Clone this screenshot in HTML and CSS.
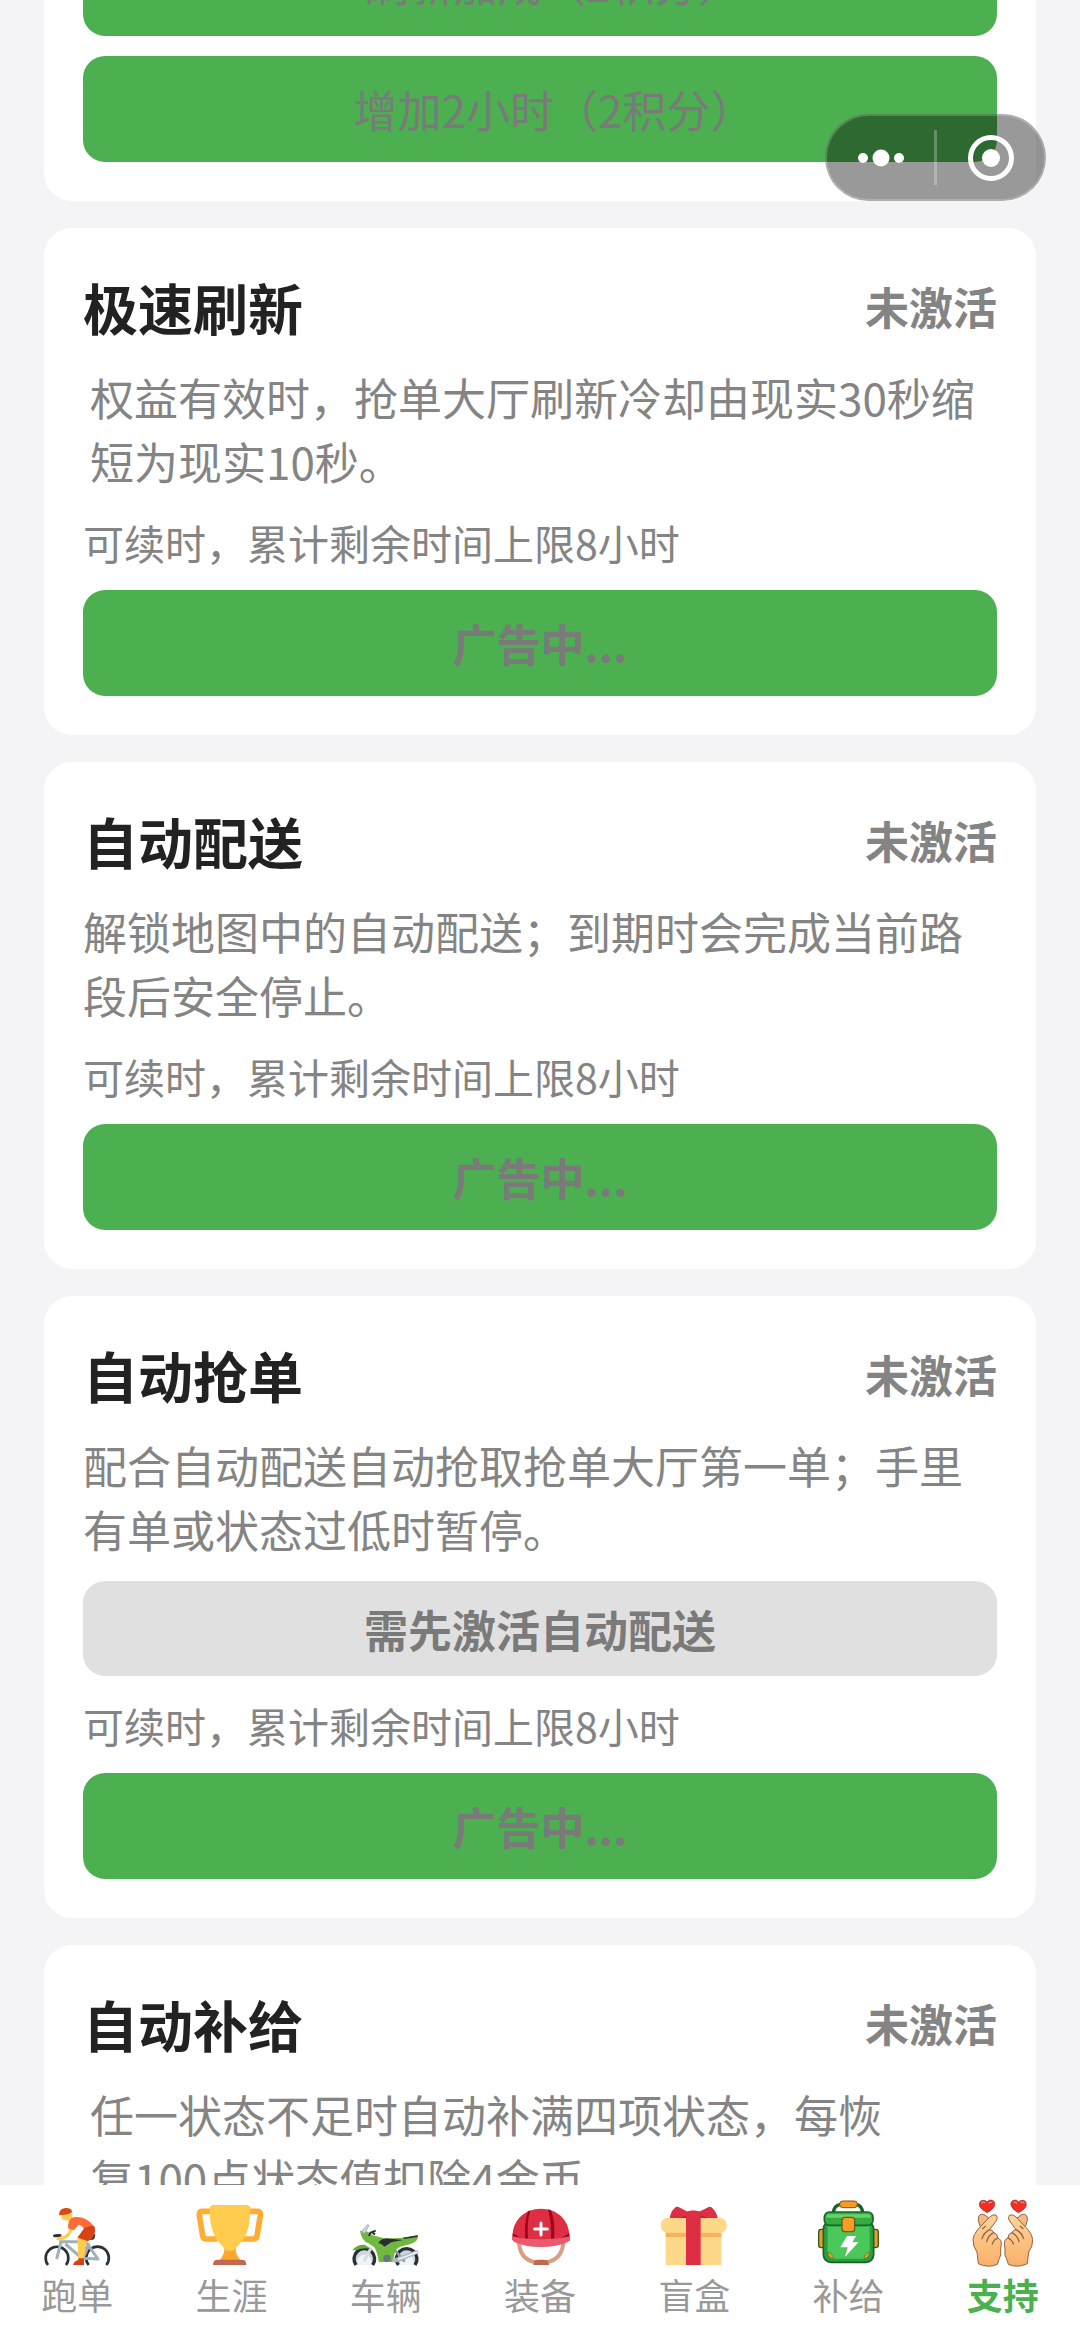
FILE: index.html
```html
<!DOCTYPE html>
<html lang="zh-CN">
<head>
    <meta charset="UTF-8">
    <meta name="viewport" content="width=device-width, initial-scale=1.0">
    <title>支持</title>
    <link rel="stylesheet" href="styles.css">
</head>
<body>
    <main class="page">
        <section class="card">
            <button type="button" class="btn btn-points">刷新加成（2积分）</button>
            <button type="button" class="btn btn-points">增加2小时（2积分）</button>
        </section>

        <section class="card">
            <div class="card-head">
                <h2>极速刷新</h2>
                <span class="status">未激活</span>
            </div>
            <p class="desc indent">权益有效时，抢单大厅刷新冷却由现实30秒缩短为现实10秒。</p>
            <p class="note">可续时，累计剩余时间上限8小时</p>
            <button type="button" class="btn">广告中...</button>
        </section>

        <section class="card">
            <div class="card-head">
                <h2>自动配送</h2>
                <span class="status">未激活</span>
            </div>
            <p class="desc">解锁地图中的自动配送；到期时会完成当前路段后安全停止。</p>
            <p class="note">可续时，累计剩余时间上限8小时</p>
            <button type="button" class="btn">广告中...</button>
        </section>

        <section class="card">
            <div class="card-head">
                <h2>自动抢单</h2>
                <span class="status">未激活</span>
            </div>
            <p class="desc">配合自动配送自动抢取抢单大厅第一单；手里有单或状态过低时暂停。</p>
            <button type="button" class="btn btn-locked">需先激活自动配送</button>
            <p class="note">可续时，累计剩余时间上限8小时</p>
            <button type="button" class="btn">广告中...</button>
        </section>

        <section class="card">
            <div class="card-head">
                <h2>自动补给</h2>
                <span class="status">未激活</span>
            </div>
            <p class="desc indent">任一状态不足时自动补满四项状态，每恢<br>复100点状态值扣除4金币</p>
        </section>
    </main>

    <!-- Floating capsule menu -->
    <div class="capsule">
        <button type="button" class="capsule-btn" aria-label="更多">
            <svg width="48" height="48" viewBox="0 0 48 48" fill="#fff">
                <circle cx="6" cy="24" r="5"/>
                <circle cx="24" cy="24" r="8.500"/>
                <circle cx="42" cy="24" r="5"/>
            </svg>
        </button>
        <span class="capsule-line"></span>
        <button type="button" class="capsule-btn" aria-label="关闭">
            <svg width="48" height="48" viewBox="0 0 48 48">
                <circle cx="24" cy="24" r="20.500" fill="none" stroke="#fff" stroke-width="5"/>
                <circle cx="24" cy="24" r="9" fill="#fff"/>
            </svg>
        </button>
    </div>

    <nav class="tabbar">
        <a href="#run" class="tab">
            <svg class="tab-icon" viewBox="123 51 216 216">
                <g fill="none" stroke="#292f33" stroke-width="8">
                    <path d="M144 255a34 34 0 1 1 54 0"/>
                    <path d="M266 255a34 34 0 1 1 53 0"/>
                </g>
                <path d="M159 165q10-4 25-2v9h-20q-6-2-5-7zM266 165q14-8 20 0l-3 11q-8 6-17 3z" fill="#292f33"/>
                <path d="M249 203q15-10 18 2l-8 20h-11z" fill="#bf360c"/>
                <path d="M170 237l14-54M177 185h80l37 52-42-2M196 192l44 38M268 190l-18 42" fill="none" stroke="#9fb0bd" stroke-width="9" stroke-linejoin="round"/>
                <path d="M207 138q3 21-15 29l-22 5v8q18 4 30-6 16-11 21-34z" fill="#ffcc4d"/>
                <path d="M232 172l31-3-12 69h-16z" fill="#ffcc4d"/>
                <path d="M184 103l33-2q1 20-12 22l-20-6z" fill="#ffcc4d"/>
                <path d="M177 106q-1-19 19-22 19-1 20 11-1 8-39 11z" fill="#d84b16"/>
                <path d="M204 145q0-29 16-33 37-5 62 27 4 5 3 14-3 22-20 30-13-3-32-10l20-24q-6-13-18-15-8 11-14 17z" fill="#ff6b35"/>
                <path d="M233 172q13-18 20-28 17-9 30-5 8 31-20 44z" fill="#d84315"/>
                <path d="M235 235h17v20h-33q3-12 16-15z" fill="#d84315"/>
            </svg>
            <span>跑单</span>
        </a>
        <a href="#career" class="tab">
            <svg class="tab-icon" viewBox="586 51 216 216">
                <path d="M640 94h-34q-8 0-7 12l10 61q2 10 11 10h34M741 94h34q8 0 7 12l-10 61q-2 10-11 10h-34" fill="none" stroke="#ffac33" stroke-width="17"/>
                <path d="M674 202h34q-2 23 16 40h-66q18-17 16-40z" fill="#ffa72b"/>
                <path d="M630 86q0-11 12-11h98q12 0 12 11 0 71-29 102-11 12-22 24h-21q-10-12-21-24-29-31-29-102z" fill="#ffcc4d"/>
                <path d="M640 255q0-16 14-16h73q13 0 13 16z" fill="#c1694f"/>
            </svg>
            <span>生涯</span>
        </a>
        <a href="#vehicle" class="tab">
            <svg class="tab-icon" viewBox="119 51 216 216">
                <g fill="#ccd6dd" stroke="#292f33" stroke-width="10">
                    <path d="M137 255a31 31 0 1 1 50 0"/>
                    <path d="M264 255a31 31 0 1 1 50 0"/>
                </g>
                <path d="M144 255a21 21 0 1 1 36 0zM271 255a21 21 0 1 1 36 0z" fill="#f1f4f6"/>
                <path d="M181 206l-18 34" stroke="#d5dde3" stroke-width="9" stroke-linecap="round"/>
                <path d="M252 209l31 36" stroke="#8899a6" stroke-width="8"/>
                <path d="M126 211q12-18 37-17l19 12q-27-4-44 5z" fill="#68a83c"/>
                <path d="M149 153q20-4 38 13l40 10 50-3 46-7q3 18-25 27-33 6-43 18l-8 35h-42q-3-28-13-44l-18-12q-20-8-25-37z" fill="#70b83e"/>
                <path d="M153 157l18-23 5 2-12 24z" fill="#ccd6dd" stroke="#8899a6" stroke-width="2"/>
                <path d="M176 168l4-10 16-6M186 157l8 6" fill="none" stroke="#292f33" stroke-width="6"/>
                <path d="M204 188q10-12 24-13l50 5-35 7-21 13q-5-8-18-12zM278 173l44-7v5l-40 6z" fill="#292f33"/>
                <circle cx="230" cy="235" r="11" fill="#66757f"/>
                <path d="M245 238l75-28 6 9-61 28h-20z" fill="#aab8c2"/>
                <path d="M264 238l58-22" stroke="#f1f4f6" stroke-width="5"/>
            </svg>
            <span>车辆</span>
        </a>
        <a href="#gear" class="tab">
            <svg class="tab-icon" viewBox="582 51 216 216">
                <path d="M627 188q4 60 66 60t67-60" fill="none" stroke="#d99e82" stroke-width="12"/>
                <path d="M670 255q1-16 13-16h20q13 0 14 16z" fill="#c1694f"/>
                <path d="M608 166c1-46 36-80 85-80s84 34 85 80l2 16-174-3z" fill="#dd2e44"/>
                <path d="M661 91q-12 38-6 91h-9q-5-50 8-88zM723 91q14 38 9 91h-9q3-50-9-94z" fill="#a0041e"/>
                <path d="M608 160q37 25 85 25t85-25v15q-40 17-85 17t-85-17z" fill="#a0041e"/>
                <path d="M606 169q40 9 87 9t87-9q2 12-8 18-30 14-79 14t-79-14q-10-6-8-18z" fill="#ea596e"/>
                <path d="M655 173l7-75h54l7 75q-34 7-68 0z" fill="#dd2e44"/>
                <path d="M693 129v36M674 147h38" stroke="#fff" stroke-width="9" stroke-linecap="round"/>
            </svg>
            <span>装备</span>
        </a>
        <a href="#box" class="tab">
            <svg class="tab-icon" viewBox="145 51 216 216">
                <path d="M168 150h167v105H168z" fill="#fdd888"/>
                <path d="M168 157h167v14H168z" fill="#f4b35c"/>
                <rect x="153" y="114" width="198" height="44" rx="20" fill="#fdd888"/>
                <path d="M180 114q3-20 16-31 5-5 15 0l23 12q17-7 34 0l25-12q8-5 14 0 14 13 17 31z" fill="#dd2e44"/>
                <path d="M229 95q22-6 44 0v160h-44z" fill="#dd2e44"/>
                <path d="M229 109l-13 5M273 109l15 5" stroke="#a0041e" stroke-width="2"/>
            </svg>
            <span>盲盒</span>
        </a>
        <a href="#supply" class="tab">
            <svg class="tab-icon" viewBox="608 51 216 216">
                <path d="M669 98q2-22 22-25h46q18 3 20 25" fill="none" stroke="#176526" stroke-width="10"/>
                <rect x="688" y="63" width="53" height="20" rx="9" fill="#f49b22" stroke="#805013" stroke-width="3"/>
                <rect x="625" y="148" width="20" height="55" rx="8" fill="#f39b20" stroke="#315627" stroke-width="4"/>
                <rect x="785" y="148" width="19" height="55" rx="8" fill="#f39b20" stroke="#315627" stroke-width="4"/>
                <rect x="639" y="124" width="151" height="123" rx="23" fill="#2d9d40" stroke="#176526" stroke-width="5"/>
                <path d="M652 137h126v78q0 21-20 21h-86q-20 0-20-21z" fill="#4ac85a"/>
                <rect x="642" y="96" width="146" height="40" rx="15" fill="#35ac43" stroke="#176526" stroke-width="5"/>
                <path d="M655 103h119q7 0 7 10H648q0-10 7-10z" fill="#66d466"/>
                <rect x="695" y="112" width="38" height="43" rx="9" fill="#f79d25" stroke="#6c5b1b" stroke-width="4"/>
                <path d="M652 216q16 5 17 20-16-1-17-20zM778 216q-16 5-17 20 16-1 17-20z" fill="#f39b20" stroke="#317c31" stroke-width="2"/>
                <path d="M710 168h27l-11 19 19-1-41 45 8-29h-22z" fill="#fff"/>
            </svg>
            <span>补给</span>
        </a>
        <a href="#support" class="tab active">
            <svg class="tab-icon" viewBox="201 51 216 216">
                <defs>
                    <linearGradient id="skin" x1="0" y1="0" x2="0" y2="1">
                        <stop offset="0" stop-color="#ffd49a"/>
                        <stop offset="1" stop-color="#f9b06a"/>
                    </linearGradient>
                    <g id="hand">
                        <path d="M240 138q-8-18-4-29 7-11 20-3l13 11-10 25z" fill="#f7b982" stroke="#8e6445" stroke-width="3"/>
                        <path d="M235 251l-4-35q-13-17-12-38 2-15 13-28l37-39q9-9 19-6 7 7 1 17l-20 27q10 1 12 9 12 2 12 16 12 5 11 18l-2 15q3 21-5 30l-5 16q-27 12-57-2z" fill="url(#skin)" stroke="#8e6445" stroke-width="3"/>
                        <path d="M269 149q-17 8-23 27M281 158q-17 9-21 27M293 174q-12 5-16 18M256 139l-8 7" fill="none" stroke="#8e6445" stroke-width="4" stroke-linecap="round"/>
                        <path d="M262 98q-24-11-24-25 1-13 13-12 7 1 10 5 6-9 16-5 11 5 6 18-5 11-21 19z" fill="#f12e25" stroke="#8f2d24" stroke-width="2"/>
                        <path d="M245 69q5-6 9-1M267 69q4-4 7-2" fill="none" stroke="#ff8a7c" stroke-width="4" stroke-linecap="round"/>
                    </g>
                </defs>
                <use href="#hand"/>
                <use href="#hand" transform="translate(617 0) scale(-1 1)"/>
            </svg>
            <span>支持</span>
        </a>
    </nav>
</body>
</html>
```

FILE: styles.css
```css
/* General Reset */
* {
    margin: 0;
    padding: 0;
    box-sizing: border-box;
}

body {
    height: 100vh;
    display: flex;
    flex-direction: column;
    overflow: hidden;
    background: #f4f4f7;
    color: #848484;
    font-family: "Noto Sans CJK SC", sans-serif;
    font-size: 44px;
    line-height: 64px;
}

/* Card list, scrolled part of the way down */
.page {
    flex: 1;
    min-height: 0;
    margin-top: -109px;
    padding: 0 44px;
    display: flex;
    flex-direction: column;
    gap: 27px;
    overflow: hidden;
}

.card {
    flex-shrink: 0;
    padding: 39px;
    border-radius: 28px;
    background: #fff;
}

.card-head {
    display: flex;
    justify-content: space-between;
    align-items: center;
    height: 78px;
}

h2 {
    font-size: 55px;
    line-height: 78px;
    color: #222;
}

.status {
    font-weight: bold;
}

.desc {
    margin-top: 20px;
}

.indent {
    padding-left: 7px;
}

.note {
    margin: 19px 0 18px;
    font-size: 41px;
    line-height: 60px;
}

.btn {
    display: block;
    width: 100%;
    height: 106px;
    border: none;
    border-radius: 22px;
    background: #4caf50;
    color: #7a7a7a;
    font: inherit;
    font-weight: bold;
    cursor: pointer;
}

.btn-points {
    padding-left: 28px;
    font-weight: normal;
}

.btn-points + .btn-points {
    margin-top: 20px;
}

.btn-locked {
    height: 95px;
    margin-top: 20px;
    background: #e0e0e0;
}

/* Capsule */
.capsule {
    position: fixed;
    top: 114px;
    right: 34px;
    width: 221px;
    height: 87px;
    display: flex;
    align-items: center;
    border: 2px solid rgba(255, 255, 255, 0.2);
    border-radius: 44px;
    background: rgba(0, 0, 0, 0.4);
}

.capsule-btn {
    flex: 1;
    height: 100%;
    display: flex;
    align-items: center;
    justify-content: center;
    border: none;
    background: none;
    cursor: pointer;
}

.capsule-line {
    width: 3px;
    height: 55px;
    background: rgba(255, 255, 255, 0.25);
}

/* Bottom tabs */
.tabbar {
    flex-shrink: 0;
    height: 155px;
    padding-top: 12px;
    display: flex;
    background: #fff;
}

.tab {
    flex: 1;
    display: flex;
    flex-direction: column;
    align-items: center;
    font-size: 36px;
    line-height: 50px;
    color: #999;
    text-decoration: none;
}

.tab-icon {
    width: 72px;
    height: 72px;
}

.tab.active {
    color: #4caf50;
    font-weight: bold;
}
```
